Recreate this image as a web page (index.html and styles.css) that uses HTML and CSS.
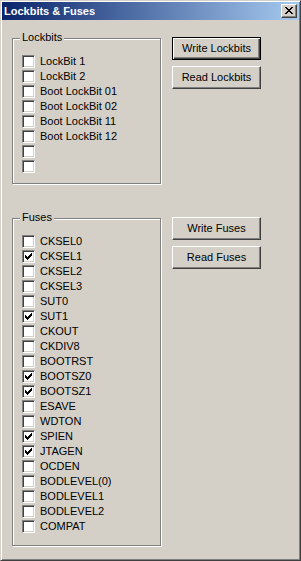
FILE: index.html
```html
<!DOCTYPE html>
<html lang="en">
<head>
    <meta charset="UTF-8" />
    <title>Lockbits &amp; Fuses</title>
    <link rel="stylesheet" href="styles.css">
</head>
<body>
    <div class="window">
        <div class="titlebar">
            <span class="title">Lockbits &amp; Fuses</span>
            <div class="close">
                <svg width="8" height="7" viewBox="0 0 8 7"><path d="M0 0h2v1h-2zM6 0h2v1h-2zM1 1h2v1h-2zM5 1h2v1h-2zM2 2h4v1h-4zM3 3h2v1h-2zM2 4h4v1h-4zM1 5h2v1h-2zM5 5h2v1h-2zM0 6h2v1h-2zM6 6h2v1h-2z" fill="#000"/></svg>
            </div>
        </div>

        <div class="client">
            <div class="section">
                <div class="group">
                    <span class="legend">Lockbits</span>
                    <div class="check"><span class="box"></span><span>LockBit 1</span></div>
                    <div class="check"><span class="box"></span><span>LockBit 2</span></div>
                    <div class="check"><span class="box"></span><span>Boot LockBit 01</span></div>
                    <div class="check"><span class="box"></span><span>Boot LockBit 02</span></div>
                    <div class="check"><span class="box"></span><span>Boot LockBit 11</span></div>
                    <div class="check"><span class="box"></span><span>Boot LockBit 12</span></div>
                    <div class="check"><span class="box"></span></div>
                    <div class="check"><span class="box"></span></div>
                </div>
                <div class="buttons">
                    <div class="button default">Write Lockbits</div>
                    <div class="button">Read Lockbits</div>
                </div>
            </div>

            <div class="section">
                <div class="group fuses">
                    <span class="legend">Fuses</span>
                    <div class="check"><span class="box"></span><span>CKSEL0</span></div>
                    <div class="check"><span class="box"><svg class="tick" width="7" height="7" viewBox="0 0 7 7"><path d="M0 2h1v3h-1zM1 3h1v3h-1zM2 4h1v3h-1zM3 3h1v3h-1zM4 2h1v3h-1zM5 1h1v3h-1zM6 0h1v3h-1z"/></svg></span><span>CKSEL1</span></div>
                    <div class="check"><span class="box"></span><span>CKSEL2</span></div>
                    <div class="check"><span class="box"></span><span>CKSEL3</span></div>
                    <div class="check"><span class="box"></span><span>SUT0</span></div>
                    <div class="check"><span class="box"><svg class="tick" width="7" height="7" viewBox="0 0 7 7"><path d="M0 2h1v3h-1zM1 3h1v3h-1zM2 4h1v3h-1zM3 3h1v3h-1zM4 2h1v3h-1zM5 1h1v3h-1zM6 0h1v3h-1z"/></svg></span><span>SUT1</span></div>
                    <div class="check"><span class="box"></span><span>CKOUT</span></div>
                    <div class="check"><span class="box"></span><span>CKDIV8</span></div>
                    <div class="check"><span class="box"></span><span>BOOTRST</span></div>
                    <div class="check"><span class="box"><svg class="tick" width="7" height="7" viewBox="0 0 7 7"><path d="M0 2h1v3h-1zM1 3h1v3h-1zM2 4h1v3h-1zM3 3h1v3h-1zM4 2h1v3h-1zM5 1h1v3h-1zM6 0h1v3h-1z"/></svg></span><span>BOOTSZ0</span></div>
                    <div class="check"><span class="box"><svg class="tick" width="7" height="7" viewBox="0 0 7 7"><path d="M0 2h1v3h-1zM1 3h1v3h-1zM2 4h1v3h-1zM3 3h1v3h-1zM4 2h1v3h-1zM5 1h1v3h-1zM6 0h1v3h-1z"/></svg></span><span>BOOTSZ1</span></div>
                    <div class="check"><span class="box"></span><span>ESAVE</span></div>
                    <div class="check"><span class="box"></span><span>WDTON</span></div>
                    <div class="check"><span class="box"><svg class="tick" width="7" height="7" viewBox="0 0 7 7"><path d="M0 2h1v3h-1zM1 3h1v3h-1zM2 4h1v3h-1zM3 3h1v3h-1zM4 2h1v3h-1zM5 1h1v3h-1zM6 0h1v3h-1z"/></svg></span><span>SPIEN</span></div>
                    <div class="check"><span class="box"><svg class="tick" width="7" height="7" viewBox="0 0 7 7"><path d="M0 2h1v3h-1zM1 3h1v3h-1zM2 4h1v3h-1zM3 3h1v3h-1zM4 2h1v3h-1zM5 1h1v3h-1zM6 0h1v3h-1z"/></svg></span><span>JTAGEN</span></div>
                    <div class="check"><span class="box"></span><span>OCDEN</span></div>
                    <div class="check"><span class="box"></span><span>BODLEVEL(0)</span></div>
                    <div class="check"><span class="box"></span><span>BODLEVEL1</span></div>
                    <div class="check"><span class="box"></span><span>BODLEVEL2</span></div>
                    <div class="check"><span class="box"></span><span>COMPAT</span></div>
                </div>
                <div class="buttons">
                    <div class="button">Write Fuses</div>
                    <div class="button">Read Fuses</div>
                </div>
            </div>
        </div>
    </div>
</body>
</html>
```

FILE: styles.css
```css
html, body {
    margin: 0;
    padding: 0;
    background: #d4d0c8;
    font-family: "Liberation Sans", Arial, sans-serif;
    font-size: 11px;
    color: #000;
}

.window {
    width: 301px;
    height: 561px;
    box-sizing: border-box;
    padding: 1px;
    background: #d4d0c8;
    border: 1px solid;
    border-color: #d4d0c8 #404040 #404040 #d4d0c8;
    box-shadow: inset 1px 1px #fff, inset -1px -1px #808080;
}

.titlebar {
    height: 18px;
    display: flex;
    align-items: center;
    justify-content: space-between;
    padding: 0 2px;
    background: linear-gradient(to right, #0a246a, #a6caf0);
}

.title {
    color: #fff;
    font-weight: bold;
    line-height: 13px;
}

.close {
    width: 16px;
    height: 14px;
    box-sizing: border-box;
    display: flex;
    align-items: center;
    justify-content: center;
    padding: 0 1px 1px 0;
    background: #d4d0c8;
    border: 1px solid;
    border-color: #fff #404040 #404040 #fff;
    box-shadow: inset -1px -1px #808080;
}

.close svg {
    display: block;
}

.client {
    padding: 17px 0 0 10px;
}

.section {
    display: flex;
    align-items: flex-start;
}

.section + .section {
    margin-top: 33px;
}

.group {
    position: relative;
    width: 149px;
    margin-top: 1px;
    box-sizing: border-box;
    padding: 15px 0 9px 9px;
    border: 1px solid #808080;
    box-shadow: inset 1px 1px #fff, 1px 1px #fff;
}

.group.fuses {
    padding-bottom: 11px;
}

.legend {
    position: absolute;
    top: -8px;
    left: 7px;
    padding: 0 2px;
    line-height: 13px;
    background: #d4d0c8;
}

.check {
    display: flex;
    align-items: center;
    gap: 5px;
    height: 15px;
    line-height: 15px;
    white-space: nowrap;
}

.check span:last-child:not(.box) {
    margin-top: -1px;
}

.box {
    width: 13px;
    height: 13px;
    flex: none;
    box-sizing: border-box;
    padding: 2px;
    background: #fff;
    border: 1px solid;
    border-color: #808080 #fff #fff #808080;
    box-shadow: inset 1px 1px #404040, inset -1px -1px #d4d0c8;
}

.tick {
    display: block;
    fill: #000;
}

.buttons {
    display: flex;
    flex-direction: column;
    gap: 6px;
    margin-left: 11px;
}

.button {
    width: 89px;
    height: 23px;
    box-sizing: border-box;
    display: flex;
    align-items: center;
    justify-content: center;
    padding-bottom: 1px;
    background: #d4d0c8;
    border: 1px solid;
    border-color: #fff #404040 #404040 #fff;
    box-shadow: inset -1px -1px #808080;
}

.button.default {
    border: 1px solid #000;
    box-shadow: inset 1px 1px #fff, inset -1px -1px #404040, inset -2px -2px #808080;
}
```
